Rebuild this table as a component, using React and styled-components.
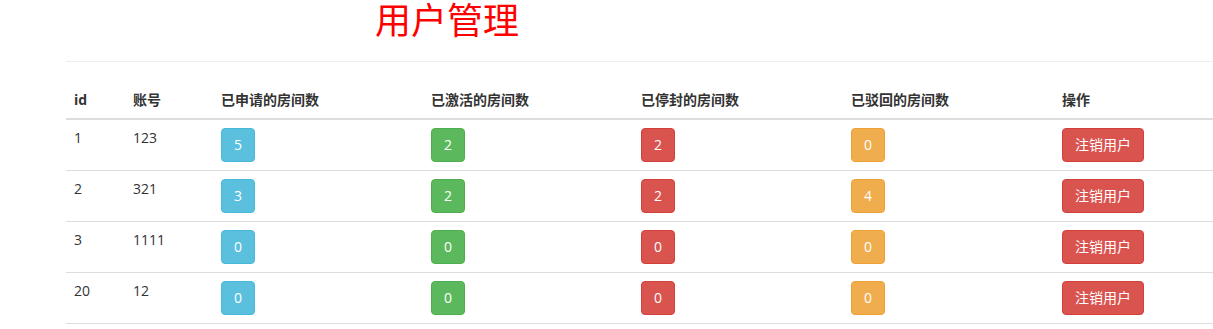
import React from "react";
import styled, { createGlobalStyle } from "styled-components";

const GlobalStyle = createGlobalStyle`
  html, body {
    margin: 0;
    padding: 0;
    background: #fff;
    overflow: hidden;
  }
  body {
    font-family: "Open Sans", "Noto Sans CJK SC", sans-serif;
    font-size: 14px;
    line-height: 20px;
    color: #333;
  }
`;

const Page = styled.div`
  padding-left: 66px;
  width: 1147px;
`;

const Title = styled.h1`
  margin: 0 0 0 309px;
  padding-top: 1px;
  font-size: 36px;
  line-height: 39px;
  font-weight: 400;
  color: #ff0000;
`;

const Rule = styled.hr`
  margin: 21px 0 20px;
  border: 0;
  border-top: 1px solid #eee;
`;

const Table = styled.table`
  width: 100%;
  border-collapse: collapse;
  border-spacing: 0;
  table-layout: fixed;
`;

const Th = styled.th`
  text-align: left;
  font-weight: 700;
  padding: 8px;
  line-height: 20px;
  border-bottom: 2px solid #ddd;
  vertical-align: bottom;
`;

const Td = styled.td`
  padding: 8px;
  line-height: 20px;
  vertical-align: top;
  border-bottom: 1px solid #ddd;
`;

const colors = {
  info: ["#5bc0de", "#46b8da"],
  success: ["#5cb85c", "#4cae4c"],
  danger: ["#d9534f", "#d43f3a"],
  warning: ["#f0ad4e", "#eea236"],
};

const Btn = styled.button`
  display: inline-block;
  padding: 6px 12px;
  font-family: inherit;
  font-size: 14px;
  line-height: 20px;
  color: #fff;
  border-radius: 4px;
  cursor: pointer;
  background: ${({ $kind }) => colors[$kind][0]};
  border: 1px solid ${({ $kind }) => colors[$kind][1]};
`;

const users = [
  { id: 1, account: "123", counts: [5, 2, 2, 0] },
  { id: 2, account: "321", counts: [3, 2, 2, 4] },
  { id: 3, account: "1111", counts: [0, 0, 0, 0] },
  { id: 20, account: "12", counts: [0, 0, 0, 0] },
];

const kinds = ["info", "success", "danger", "warning"];

export default function App() {
  return (
    <Page>
      <GlobalStyle />
      <Title>用户管理</Title>
      <Rule />
      <Table>
        <colgroup>
          <col style={{ width: 59 }} />
          <col style={{ width: 88 }} />
          <col style={{ width: 210 }} />
          <col style={{ width: 210 }} />
          <col style={{ width: 210 }} />
          <col style={{ width: 211 }} />
          <col />
        </colgroup>
        <thead>
          <tr>
            <Th>id</Th>
            <Th>账号</Th>
            <Th>已申请的房间数</Th>
            <Th>已激活的房间数</Th>
            <Th>已停封的房间数</Th>
            <Th>已驳回的房间数</Th>
            <Th>操作</Th>
          </tr>
        </thead>
        <tbody>
          {users.map((u) => (
            <tr key={u.id}>
              <Td>{u.id}</Td>
              <Td>{u.account}</Td>
              {u.counts.map((c, i) => (
                <Td key={i}>
                  <Btn $kind={kinds[i]}>{c}</Btn>
                </Td>
              ))}
              <Td>
                <Btn $kind="danger">注销用户</Btn>
              </Td>
            </tr>
          ))}
        </tbody>
      </Table>
    </Page>
  );
}
